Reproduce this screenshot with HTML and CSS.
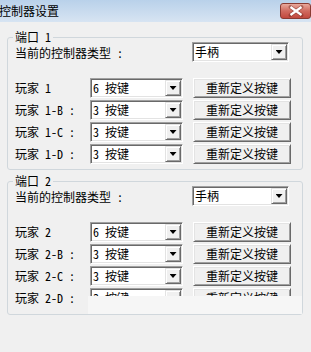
FILE: index.html
```html
<!DOCTYPE html>
<html lang="zh-CN">

<head>
    <meta charset="UTF-8">
    <meta name="viewport" content="width=device-width, initial-scale=1.0">
    <title>控制器设置</title>
    <link rel="stylesheet" href="styles.css">
</head>

<body>

    <div class="titlebar">
        <span class="title">控制器设置</span>
        <span class="close">
            <svg width="28" height="14" viewBox="0 0 28 14">
                <path d="M8.5 3 L19.5 11 M19.5 3 L8.5 11" stroke="#6a241d" stroke-width="4" stroke-linecap="round" opacity="0.45" fill="none" />
                <path d="M8.5 3 L19.5 11 M19.5 3 L8.5 11" stroke="#fff" stroke-width="2.2" fill="none" />
            </svg>
        </span>
    </div>

    <div class="content">

        <!-- 端口 1 -->
        <fieldset class="port">
            <legend>端口 1</legend>
            <div class="type-row">
                <span class="type-label">当前的控制器类型 :</span>
                <div class="combo combo-type"><span class="combo-text">手柄</span><span class="combo-btn"></span></div>
            </div>
            <div class="players">
                <div class="player-row">
                    <span class="player-label">玩家 1</span>
                    <div class="combo"><span class="combo-text">6 按键</span><span class="combo-btn"></span></div>
                    <button class="remap">重新定义按键</button>
                </div>
                <div class="player-row">
                    <span class="player-label">玩家 1-B :</span>
                    <div class="combo"><span class="combo-text">3 按键</span><span class="combo-btn"></span></div>
                    <button class="remap">重新定义按键</button>
                </div>
                <div class="player-row">
                    <span class="player-label">玩家 1-C :</span>
                    <div class="combo"><span class="combo-text">3 按键</span><span class="combo-btn"></span></div>
                    <button class="remap">重新定义按键</button>
                </div>
                <div class="player-row">
                    <span class="player-label">玩家 1-D :</span>
                    <div class="combo"><span class="combo-text">3 按键</span><span class="combo-btn"></span></div>
                    <button class="remap">重新定义按键</button>
                </div>
            </div>
        </fieldset>

        <!-- 端口 2 -->
        <fieldset class="port port-last">
            <legend>端口 2</legend>
            <div class="type-row">
                <span class="type-label">当前的控制器类型 :</span>
                <div class="combo combo-type"><span class="combo-text">手柄</span><span class="combo-btn"></span></div>
            </div>
            <div class="players">
                <div class="player-row">
                    <span class="player-label">玩家 2</span>
                    <div class="combo"><span class="combo-text">6 按键</span><span class="combo-btn"></span></div>
                    <button class="remap">重新定义按键</button>
                </div>
                <div class="player-row">
                    <span class="player-label">玩家 2-B :</span>
                    <div class="combo"><span class="combo-text">3 按键</span><span class="combo-btn"></span></div>
                    <button class="remap">重新定义按键</button>
                </div>
                <div class="player-row">
                    <span class="player-label">玩家 2-C :</span>
                    <div class="combo"><span class="combo-text">3 按键</span><span class="combo-btn"></span></div>
                    <button class="remap">重新定义按键</button>
                </div>
                <div class="player-row">
                    <span class="player-label">玩家 2-D :</span>
                    <div class="combo"><span class="combo-text">3 按键</span><span class="combo-btn"></span></div>
                    <button class="remap">重新定义按键</button>
                </div>
            </div>
            <!-- 未重绘的区域 -->
            <div class="mask"></div>
        </fieldset>

    </div>

</body>

</html>
```

FILE: styles.css
```css
* {
    box-sizing: border-box;
}

body {
    margin: 0;
    width: 311px;
    height: 352px;
    overflow: hidden;
    background-color: #f0f0f0;
    font-family: "Noto Sans Mono CJK SC", "Noto Sans CJK SC", sans-serif;
    font-size: 12px;
    line-height: 14px;
    color: #000;
}

.titlebar {
    height: 22px;
    display: flex;
    justify-content: space-between;
    background: linear-gradient(#b9d1ea, #d7e4f2);
}

.title {
    padding-top: 4px;
    margin-left: -1px;
}

.close {
    width: 31px;
    height: 16px;
    margin-top: 3px;
    border: 1px solid #8a3b33;
    border-radius: 3px;
    background: linear-gradient(#e8a99c, #d06a5f 50%, #c2493e);
    display: flex;
    align-items: center;
    justify-content: center;
}

.content {
    padding: 8px 8px 0 7px;
}

.port {
    position: relative;
    margin: 0;
    border: 1px solid #d0d7dc;
    border-radius: 3px;
    padding: 0 6px 5px 7px;
}

.port + .port {
    margin-top: 4px;
}

.port-last {
    padding-bottom: 6px;
}

.port legend {
    padding: 0 2px;
    margin-left: -2px;
    line-height: 14px;
}

.type-row {
    display: flex;
    align-items: center;
    height: 20px;
    margin-top: -2px;
}

.type-label {
    width: 177px;
    padding-top: 2px;
}

.players {
    margin-top: 16px;
}

.player-row {
    display: flex;
    align-items: center;
    height: 20px;
    margin-bottom: 2px;
}

.player-row:last-child {
    margin-bottom: 0;
}

.player-label {
    width: 75px;
}

.combo {
    display: flex;
    align-items: center;
    width: 93px;
    height: 20px;
    padding: 1px;
    background-color: #fff;
    border: 1px solid;
    border-color: #a0a0a0 #fff #fff #a0a0a0;
    box-shadow: inset 1px 1px 0 #696969, inset -1px -1px 0 #e3e3e3;
}

.combo-type {
    width: 97px;
}

.combo-text {
    flex: 1;
    padding-left: 1px;
    white-space: nowrap;
}

.combo-btn {
    width: 16px;
    height: 16px;
    display: flex;
    align-items: center;
    justify-content: center;
    background-color: #f0f0f0;
    border: 1px solid;
    border-color: #e3e3e3 #696969 #696969 #e3e3e3;
    box-shadow: inset 1px 1px 0 #fff, inset -1px -1px 0 #a0a0a0;
}

.combo-btn::after {
    content: "";
    width: 7px;
    height: 4px;
    background-color: #000;
    clip-path: polygon(0 0, 100% 0, 50% 100%);
}

.remap {
    width: 98px;
    height: 20px;
    margin-left: 10px;
    padding: 0;
    font: inherit;
    color: #000;
    background-color: #f0f0f0;
    border: 1px solid;
    border-color: #fff #696969 #696969 #fff;
    box-shadow: inset 1px 1px 0 #e3e3e3, inset -1px -1px 0 #a0a0a0;
}

.mask {
    position: absolute;
    left: 80px;
    right: 0;
    bottom: 0;
    height: 18px;
    background-color: #f6f6f6;
}
```
